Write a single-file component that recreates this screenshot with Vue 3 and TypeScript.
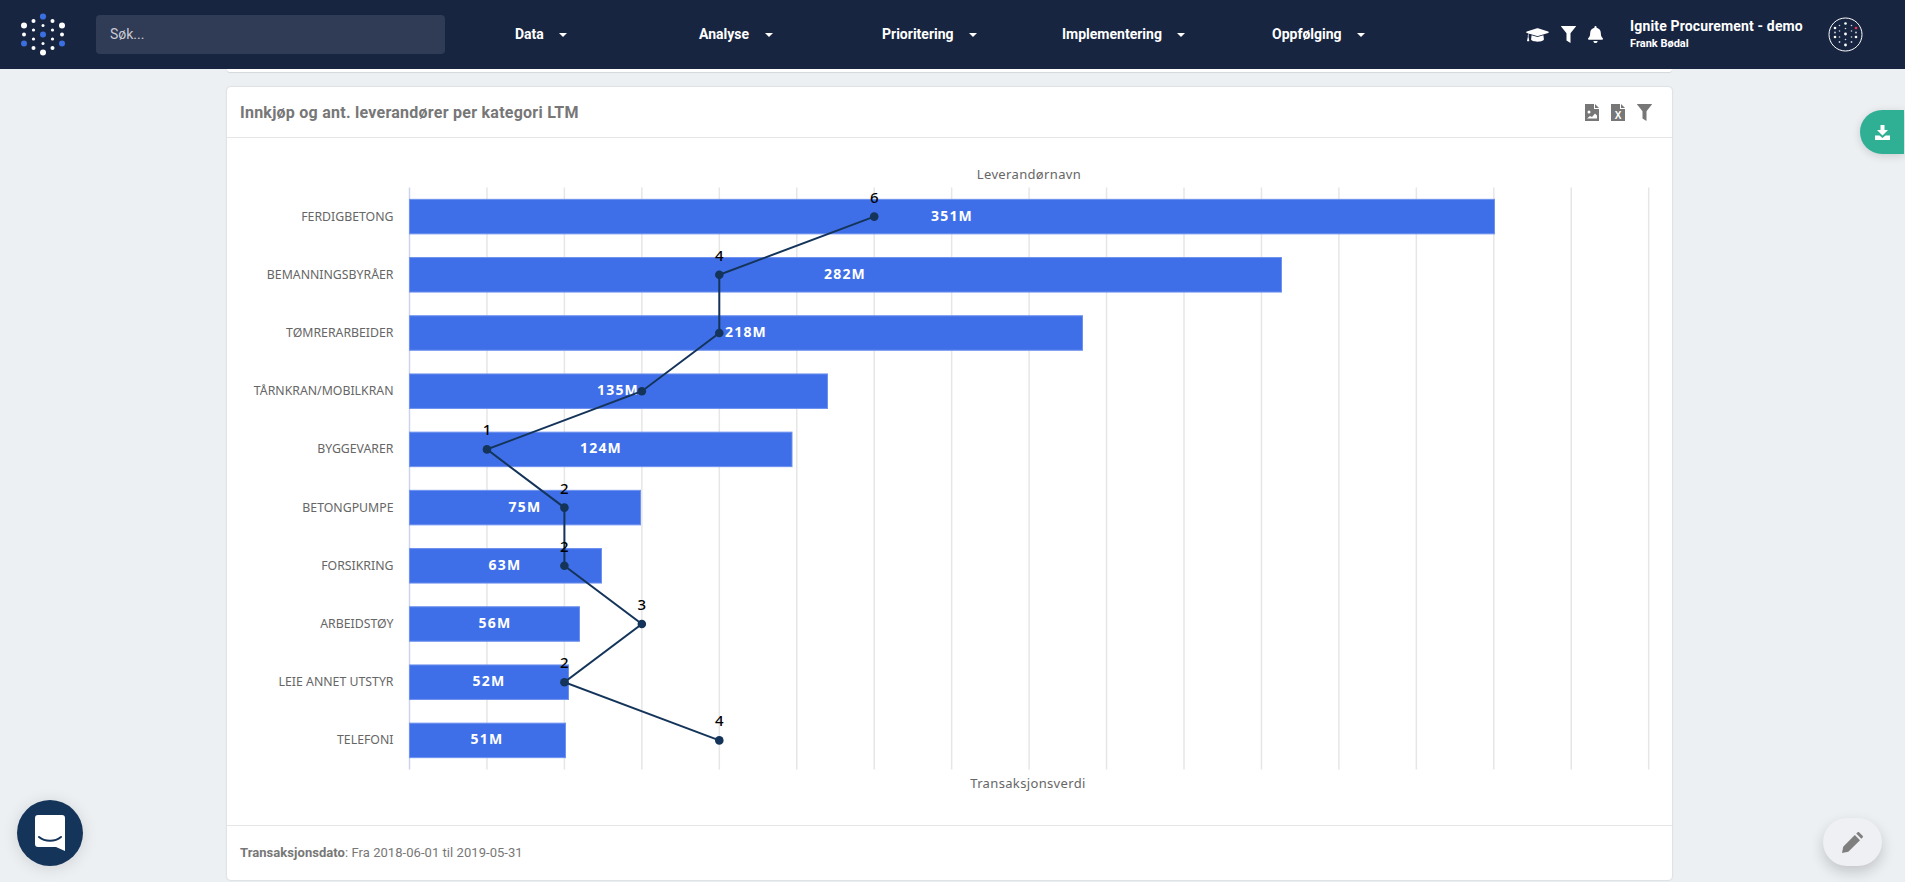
<script setup lang="ts">
interface Row {
  name: string
  width: number
  label: string
  count: number
  labelX: number
}

const navItems = ['Data', 'Analyse', 'Prioritering', 'Implementering', 'Oppfølging']

// bar widths in px, the scale is roughly 3.09px per million
const rows: Row[] = [
  {name: 'FERDIGBETONG', width: 1085, label: '351M', count: 6, labelX: 725},
  {name: 'BEMANNINGSBYRÅER', width: 872, label: '282M', count: 4, labelX: 618},
  {name: 'TØMRERARBEIDER', width: 673, label: '218M', count: 4, labelX: 519},
  {name: 'TÅRNKRAN/MOBILKRAN', width: 418, label: '135M', count: 3, labelX: 391},
  {name: 'BYGGEVARER', width: 382.5, label: '124M', count: 1, labelX: 374},
  {name: 'BETONGPUMPE', width: 231, label: '75M', count: 2, labelX: 298},
  {name: 'FORSIKRING', width: 192, label: '63M', count: 2, labelX: 278},
  {name: 'ARBEIDSTØY', width: 170, label: '56M', count: 3, labelX: 268},
  {name: 'LEIE ANNET UTSTYR', width: 159, label: '52M', count: 2, labelX: 262},
  {name: 'TELEFONI', width: 156, label: '51M', count: 4, labelX: 260},
]

const originX = 182.5
const originY = 49.5
const bandH = 58.2
const barH = 34.5
const unit = 77.45

const ticks = Array.from({length: 17}, (_, i) => originX + i * unit)
const bandY = (i: number) => originY + i * bandH
const pointX = (n: number) => originX + n * unit
const pointY = (i: number) => bandY(i) + bandH / 2
const linePoints = rows.map((r, i) => `${pointX(r.count)},${pointY(i)}`).join(' ')

const logoDots = [
  [43, 16.5, 3.1, '#3b6fe0'], [33.5, 21, 2, '#fff'], [52.5, 21, 2, '#fff'], [24, 25.5, 3, '#fff'], [62, 25.5, 3, '#fff'],
  [43, 25.5, 1.5, '#fff'], [33.5, 30, 1.6, '#fff'], [52.5, 30, 1.6, '#fff'], [24, 34.5, 2, '#fff'], [62, 34.5, 2, '#fff'],
  [43, 34.5, 3, '#3b6fe0'], [33.5, 39, 1.6, '#fff'], [52.5, 39, 1.6, '#fff'], [24, 43.5, 3, '#3b6fe0'], [62, 43.5, 3, '#3b6fe0'],
  [43, 43.5, 1.5, '#fff'], [33.5, 48, 2, '#fff'], [52.5, 48, 2, '#fff'], [43, 52.5, 3, '#fff'],
] as [number, number, number, string][]

const avatarDots = [
  [17.5, 6.5, 1.3, '#fff'], [11.5, 8.5, .8, '#cfd3dc'], [23.5, 8.5, .8, '#cfd3dc'], [7, 11, 1.3, '#fff'], [28, 11, 1.3, '#e8344e'],
  [17.5, 11.5, .8, '#cfd3dc'], [11.5, 14, .8, '#cfd3dc'], [23.5, 14, .8, '#cfd3dc'], [7, 15.5, .9, '#cfd3dc'], [28, 15.5, .9, '#cfd3dc'],
  [17.5, 17, 1.4, '#fff'], [11.5, 20, .8, '#cfd3dc'], [23.5, 20, .8, '#cfd3dc'], [7, 20, 1.3, '#fff'], [28, 20, 1.3, '#fff'],
  [17.5, 22.5, .8, '#cfd3dc'], [11.5, 25, .9, '#cfd3dc'], [23.5, 25, .9, '#cfd3dc'], [17.5, 28, 1.4, '#fff'],
] as [number, number, number, string][]
</script>

<template>
  <div class="page">
    <header class="navbar">
      <svg class="logo" width="86" height="69" viewBox="0 0 86 69">
        <circle v-for="(d, i) in logoDots" :key="i" :cx="d[0]" :cy="d[1]" :r="d[2]" :fill="d[3]" />
      </svg>
      <div class="search">Søk...</div>
      <nav class="nav">
        <a v-for="item in navItems" :key="item" class="nav-item">
          {{ item }}<span class="caret"></span>
        </a>
      </nav>
      <div class="tools">
        <svg width="23" height="18" viewBox="0 0 640 512" fill="#fff">
          <path d="M622 154 334 66a48 48 0 0 0-28 0L18 154c-24 7-24 37 0 44l50 16c-11 14-18 31-19 49-6 4-9 10-9 17 0 6 3 12 8 16L22 418c-2 7 3 14 10 14h44c7 0 12-7 10-14L62 296c5-4 8-10 8-16 0-7-4-13-9-16 2-20 12-36 28-44l217 67c11 3 21 2 28 0l288-88c24-8 24-38 0-45zM344 308a72 72 0 0 1-48 0l-144-44-14 116c0 35 82 68 182 68s182-33 182-68l-14-116z" />
        </svg>
        <svg width="15" height="17" viewBox="0 0 15 17" fill="#fff">
          <path d="M.3 0h14.4c.3 0 .4.3.2.6L9.5 7.2V17l-4-2.6V7.2L.1.6C-.1.3 0 0 .3 0z" />
        </svg>
        <svg width="15" height="17" viewBox="0 0 448 512" fill="#fff">
          <path d="M224 512c35 0 64-29 64-64H160c0 35 29 64 64 64zm215-150c-19-21-55-52-55-154 0-78-54-140-128-155V32a32 32 0 0 0-64 0v21C118 68 64 130 64 208c0 102-36 133-55 154-6 6-9 14-9 22 0 16 13 32 32 32h384c19 0 32-16 32-32 0-8-3-16-9-22z" />
        </svg>
      </div>
      <div class="user">
        <div class="company">Ignite Procurement - demo</div>
        <div class="person">Frank Bødal</div>
      </div>
      <svg class="avatar" width="35" height="35" viewBox="0 0 35 35">
        <circle cx="17.5" cy="17.5" r="16.5" fill="none" stroke="#fff" stroke-width="1" />
        <circle v-for="(d, i) in avatarDots" :key="i" :cx="d[0]" :cy="d[1]" :r="d[2]" :fill="d[3]" />
      </svg>
    </header>

    <div class="prev-card"></div>

    <section class="card">
      <div class="card-head">
        <h2>Innkjøp og ant. leverandører per kategori LTM</h2>
        <div class="card-tools">
          <svg width="14" height="17" viewBox="0 0 14 17">
            <path d="M0 0h9v5h5v12H0z" fill="#777" />
            <path d="M10 0l4 4h-4z" fill="#777" />
            <circle cx="4" cy="8" r="1.5" fill="#fff" />
            <path d="M2 14.5l3-2.5 2 1 3-3.5 2 2v3z" fill="#fff" />
          </svg>
          <svg width="14" height="17" viewBox="0 0 14 17">
            <path d="M0 0h9v5h5v12H0z" fill="#777" />
            <path d="M10 0l4 4h-4z" fill="#777" />
            <text x="7" y="15" text-anchor="middle" class="x-mark">X</text>
          </svg>
          <svg width="15" height="17" viewBox="0 0 15 17" fill="#777">
            <path d="M.3 0h14.4c.3 0 .4.3.2.6L9.5 7.2V17l-4-2.6V7.2L.1.6C-.1.3 0 0 .3 0z" />
          </svg>
        </div>
      </div>

      <div class="card-body">
        <svg class="chart" width="1443" height="687" viewBox="0 0 1443 687">
          <text x="802" y="41" text-anchor="middle" class="axis-title">Leverandørnavn</text>
          <line
            v-for="(t, i) in ticks"
            :key="i"
            :x1="t" :x2="t"
            :y1="originY" :y2="originY + bandH * 10"
            :stroke="i === 0 ? '#cdd5ec' : '#e6e6e6'"
            stroke-width="1.5"
          />
          <g v-for="(r, i) in rows" :key="r.name">
            <text :x="originX - 16" :y="bandY(i) + 33" text-anchor="end" class="cat">{{ r.name }}</text>
            <rect
              :x="originX"
              :y="bandY(i) + (bandH - barH) / 2"
              :width="r.width"
              :height="barH"
              fill="#3f6fe8"
              stroke="#6d91ee"
              stroke-width="1"
            />
            <text :x="r.labelX" :y="bandY(i) + 33" text-anchor="middle" class="val">{{ r.label }}</text>
          </g>
          <polyline :points="linePoints" fill="none" stroke="#14345a" stroke-width="2" />
          <g v-for="(r, i) in rows" :key="'p' + i">
            <circle :cx="pointX(r.count)" :cy="pointY(i)" r="4.3" fill="#14345a" />
            <text v-if="i !== 2 && i !== 3" :x="pointX(r.count)" :y="pointY(i) - 14" text-anchor="middle" class="cnt">{{ r.count }}</text>
          </g>
          <text x="801" y="650" text-anchor="middle" class="axis-title">Transaksjonsverdi</text>
        </svg>
      </div>

      <div class="card-foot"><b>Transaksjonsdato</b>: Fra 2018-06-01 til 2019-05-31</div>
    </section>

    <button class="export-tab" aria-label="Last ned">
      <svg width="15" height="15" viewBox="0 0 15 15" fill="#fff">
        <path d="M5.5 0h4v5h3.5l-5.5 5.5L2 5h3.5zM0 10.5h4.5l3 2.5 3-2.5H15V15H0z" />
      </svg>
    </button>

    <button class="chat" aria-label="Chat">
      <svg width="30" height="36" viewBox="0 0 30 36">
        <path d="M3 0h24a3 3 0 0 1 3 3v33l-9-4H3a3 3 0 0 1-3-3V3a3 3 0 0 1 3-3z" fill="#fff" />
        <path d="M4 22c6 5 16 5 22 0" fill="none" stroke="#14345a" stroke-width="2" stroke-linecap="round" />
      </svg>
    </button>

    <button class="edit" aria-label="Rediger">
      <svg width="21" height="21" viewBox="0 0 21 21" fill="#7f7f7f">
        <path d="M0 21l1.2-6.3L12.8 3l5.2 5.2L6.3 19.8zM14.2 1.6 15.5.4c.5-.5 1.3-.5 1.8 0l3.3 3.3c.5.5.5 1.3 0 1.8l-1.3 1.3z" />
      </svg>
    </button>
  </div>
</template>

<style scoped>
.page {
  position: relative;
  height: 882px;
  overflow: hidden;
  background: #edf0f3;
  font-family: Roboto, "Liberation Sans", sans-serif;
}
.navbar {
  display: flex;
  align-items: center;
  height: 69px;
  background: #182541;
  color: #fff;
}
.logo { flex: none; width: 86px; margin-right: 10px; }
.search {
  flex: none;
  box-sizing: border-box;
  width: 349px;
  height: 39px;
  padding: 0 14px;
  line-height: 39px;
  border-radius: 4px;
  background: #303b56;
  color: #c9ccd3;
  font-size: 14px;
}
.nav {
  position: absolute;
  top: 0;
  left: 0;
  height: 69px;
}
.nav-item {
  position: absolute;
  top: 0;
  line-height: 68px;
  font-size: 14px;
  font-weight: 700;
  white-space: nowrap;
}
.nav-item:nth-child(1) { left: 515px; }
.nav-item:nth-child(2) { left: 699px; }
.nav-item:nth-child(3) { left: 882px; }
.nav-item:nth-child(4) { left: 1062px; }
.nav-item:nth-child(5) { left: 1272px; }
.caret {
  display: inline-block;
  margin-left: 15.5px;
  vertical-align: middle;
  border-top: 4px solid #fff;
  border-left: 4.5px solid transparent;
  border-right: 4.5px solid transparent;
}
.tools {
  display: flex;
  align-items: center;
  gap: 12px;
  margin-left: auto;
}
.user {
  width: 196px;
  margin-left: 27px;
}
.company { font-size: 14px; font-weight: 700; line-height: 18px; letter-spacing: .15px; }
.person { font-size: 11px; font-weight: 700; line-height: 18px; }
.avatar { flex: none; margin-right: 42px; margin-left: 2px; }
.prev-card {
  box-sizing: border-box;
  width: 1445px;
  height: 3px;
  margin-left: 227px;
  background: #fff;
  border-radius: 0 0 4px 4px;
  box-shadow: 0 1px 1px rgba(0, 0, 0, .1);
}
.card {
  display: flex;
  flex-direction: column;
  box-sizing: border-box;
  width: 1445px;
  height: 793px;
  margin: 15px 0 0 227px;
  background: #fff;
  border-radius: 4px;
  box-shadow: 0 0 2px rgba(0, 0, 0, .2);
}
.card-head {
  display: flex;
  align-items: center;
  justify-content: space-between;
  box-sizing: border-box;
  flex: none;
  height: 51px;
  padding: 0 20px 0 13px;
  border-bottom: 1px solid #e6e6e6;
}
.card-head h2 {
  margin: 0;
  font-size: 16px;
  font-weight: 700;
  letter-spacing: .25px;
  color: #777;
}
.card-tools {
  display: flex;
  gap: 12px;
}
.x-mark {
  font-family: "Liberation Sans", sans-serif;
  font-size: 10px;
  font-weight: 700;
  fill: #fff;
}
.card-body { flex: 1; min-height: 0; }
.chart { display: block; }
.axis-title {
  font-family: "Noto Sans", sans-serif;
  font-size: 13px;
  letter-spacing: .35px;
  fill: #666;
}
.cat {
  font-family: "Noto Sans", sans-serif;
  font-size: 12.3px;
  fill: #666;
}
.val {
  font-family: "Noto Sans", sans-serif;
  font-size: 14px;
  font-weight: 700;
  letter-spacing: 1.2px;
  fill: #fff;
}
.cnt {
  font-family: "Noto Sans", sans-serif;
  font-size: 15px;
  font-weight: 500;
  fill: #000;
}
.card-foot {
  flex: none;
  box-sizing: border-box;
  height: 55px;
  padding: 0 13px;
  line-height: 54px;
  border-top: 1px solid #e6e6e6;
  font-size: 13px;
  letter-spacing: .05px;
  color: #777;
}
button {
  position: absolute;
  display: flex;
  align-items: center;
  justify-content: center;
  padding: 0;
  border: 0;
}
.export-tab {
  top: 110px;
  right: 1px;
  width: 44px;
  height: 44px;
  border-radius: 22px 0 0 22px;
  background: #2fb094;
  box-shadow: 0 2px 8px rgba(0, 0, 0, .15);
}
.chat {
  left: 17px;
  top: 800px;
  width: 66px;
  height: 66px;
  border-radius: 50%;
  background: #14345a;
  box-shadow: 0 2px 16px rgba(0, 0, 0, .12);
}
.edit {
  left: 1823px;
  top: 818px;
  width: 59px;
  height: 48px;
  border-radius: 24px;
  background: #eef0f3;
  box-shadow: 0 6px 14px rgba(0, 0, 0, .18);
}
</style>

<style>
html, body { margin: 0; background: #edf0f3; }
</style>
